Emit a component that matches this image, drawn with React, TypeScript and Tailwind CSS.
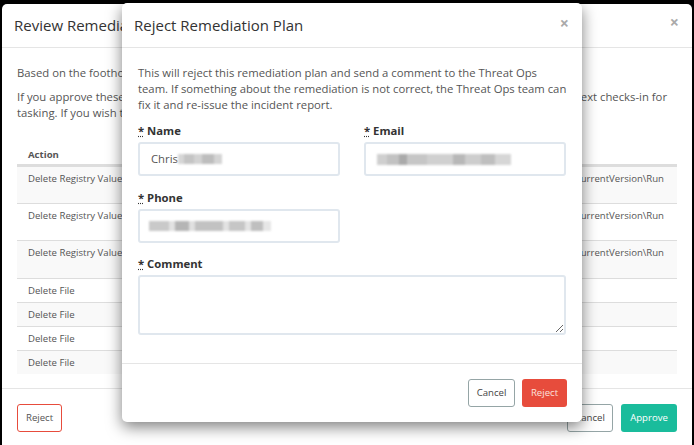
import React from "react";

const F = { fontFamily: "'Open Sans', 'Liberation Sans', sans-serif" };

function Blur({ segs, h = 10 }: { segs: [number, string][]; h?: number }) {
  return (
    <span className="inline-flex items-center blur-[1.2px] align-middle">
      {segs.map(([w, c], i) => (
        <span key={i} className="inline-block" style={{ width: w, height: h, background: c }} />
      ))}
    </span>
  );
}

function Row({ label, tall, striped }: { label: string; tall?: number; striped?: boolean }) {
  return (
    <div
      className={`flex justify-between border-t border-[#dddddd] pt-[4px] pl-[11px] pr-[13px] text-[9.6px] leading-[16px] text-[#555] ${striped ? "bg-[#f9f9f9]" : "bg-white"}`}
      style={{ height: tall ?? 24 }}
    >
      <span className="whitespace-nowrap">{label}</span>
      {tall ? <span className="whitespace-nowrap">HKLM\SOFTWARE\Microsoft\Windows\CurrentVersion\Run</span> : null}
    </div>
  );
}

export default function App() {
  return (
    <div className="relative w-[694px] h-[445px] bg-black overflow-hidden" style={F}>
      {/* Back modal */}
      <div className="absolute left-[2px] top-[4px] w-[690px] h-[460px] bg-white rounded-[5px] flex flex-col">
        <div className="h-[44px] shrink-0 border-b border-[#e5e5e5] flex items-center justify-between pl-[12px] pr-[13px]">
          <span className="text-[15px] text-[#333] whitespace-nowrap">Review Remediation Plan</span>
          <span className="text-[16px] font-bold text-[#aaa] leading-none -mt-[7px]">×</span>
        </div>
        <div className="px-[15px] pt-[17px] pb-[14px] text-[11.3px] leading-[16px] text-[#555]">
          <p className="mb-[8px] whitespace-nowrap">Based on the foothold identified in this incident, the following remediation plan is recommended.</p>
          <div className="flex justify-between">
            <span className="whitespace-nowrap">If you approve these actions, they will run</span>
            <span className="whitespace-nowrap mr-[10px]">when the agent next checks-in for</span>
          </div>
          <p className="whitespace-nowrap">tasking. If you wish to change the plan, reject it.</p>
          <div className="mt-[24px]">
            <div className="h-[21px] border-b-2 border-[#dddddd] pl-[11px] text-[9.6px] font-bold leading-[19px] text-[#555]">Action</div>
            <Row label="Delete Registry Value" tall={37} striped />
            <Row label="Delete Registry Value" tall={37} />
            <Row label="Delete Registry Value" tall={38} striped />
            <Row label="Delete File" />
            <Row label="Delete File" striped />
            <Row label="Delete File" />
            <Row label="Delete File" striped />
          </div>
        </div>
        <div className="border-t border-[#e5e5e5] px-[15px] pt-[15px] flex justify-between">
          <button className="h-[28px] px-[8px] border border-[#e74c3c] rounded-[3px] text-[9.6px] text-[#555] bg-white">Reject</button>
          <div className="flex gap-[8px]">
            <button className="h-[28px] w-[46px] border border-[#95a5a6] rounded-[3px] text-[9.6px] text-[#444] bg-white">Cancel</button>
            <button className="h-[28px] w-[56px] rounded-[3px] text-[9.6px] text-white bg-[#1abc9c]">Approve</button>
          </div>
        </div>
      </div>

      {/* Front modal */}
      <div className="absolute left-[122px] top-[3px] w-[460px] bg-white rounded-[5px] shadow-[0_5px_15px_rgba(0,0,0,0.5)]">
        <div className="h-[45px] border-b border-[#e5e5e5] flex items-center justify-between pl-[12px] pr-[13px]">
          <span className="text-[15px] text-[#333]">Reject Remediation Plan</span>
          <span className="text-[16px] font-bold text-[#aaa] leading-none -mt-[5px]">×</span>
        </div>
        <div className="px-[16px] pt-[17px] pb-[28px] text-[11.3px] leading-[16px] text-[#555]">
          <p className="mb-[10px]">
            <span className="whitespace-nowrap">This will reject this remediation plan and send a comment to the Threat Ops</span>
            <br />
            <span className="whitespace-nowrap">team. If something about the remediation is not correct, the Threat Ops team can</span>
            <br />
            <span className="whitespace-nowrap">fix it and re-issue the incident report.</span>
          </p>
          <div className="grid grid-cols-2 gap-x-[24px]">
            <div className="mb-[14px]">
              <label className="block h-[16px] mb-[3px] font-bold text-[#333]"><abbr title="required">*</abbr> Name</label>
              <div className="h-[34px] border-2 border-[#e0e7ee] rounded-[3px] flex items-center pl-[11px] text-[#555]">
                <span>Chris</span>
                <Blur segs={[[6, "#d6d6d6"], [10, "#c4c4c4"], [8, "#d2d2d2"], [12, "#bdbdbd"], [8, "#d4d4d4"]]} />
              </div>
            </div>
            <div className="mb-[14px]">
              <label className="block h-[16px] mb-[3px] font-bold text-[#333]"><abbr title="required">*</abbr> Email</label>
              <div className="h-[34px] border-2 border-[#e0e7ee] rounded-[3px] flex items-center pl-[11px]">
                <Blur h={11} segs={[[10, "#cfcfcf"], [12, "#c2c2c2"], [8, "#aaaaaa"], [20, "#c6c6c6"], [26, "#d0d0d0"], [12, "#b8b8b8"], [16, "#cdcdcd"], [14, "#bfbfbf"], [16, "#d6d6d6"]]} />
              </div>
            </div>
            <div className="mb-[13px]">
              <label className="block h-[16px] mb-[3px] font-bold text-[#333]"><abbr title="required">*</abbr> Phone</label>
              <div className="h-[34px] border-2 border-[#e0e7ee] rounded-[3px] flex items-center pl-[9px]">
                <Blur segs={[[20, "#c9c9c9"], [6, "#e2e2e2"], [14, "#b5b5b5"], [6, "#e0e0e0"], [28, "#c2c2c2"], [6, "#e2e2e2"], [16, "#c6c6c6"], [6, "#e4e4e4"], [12, "#bfbfbf"], [8, "#e6e6e6"]]} />
              </div>
            </div>
            <div />
            <div className="col-span-2">
              <label className="block h-[16px] mb-[3px] font-bold text-[#333]"><abbr title="required">*</abbr> Comment</label>
              <textarea className="block w-full h-[60px] border-2 border-[#e0e7ee] rounded-[3px] bg-white" />
            </div>
          </div>
        </div>
        <div className="border-t border-[#e5e5e5] px-[15px] pt-[15px] pb-[15px] flex justify-end gap-[7px]">
          <button className="h-[28px] w-[47px] border border-[#95a5a6] rounded-[3px] text-[9.6px] text-[#444] bg-white">Cancel</button>
          <button className="h-[28px] w-[45px] rounded-[3px] text-[9.6px] text-[#fbe0dd] bg-[#e74c3c]">Reject</button>
        </div>
      </div>
    </div>
  );
}
